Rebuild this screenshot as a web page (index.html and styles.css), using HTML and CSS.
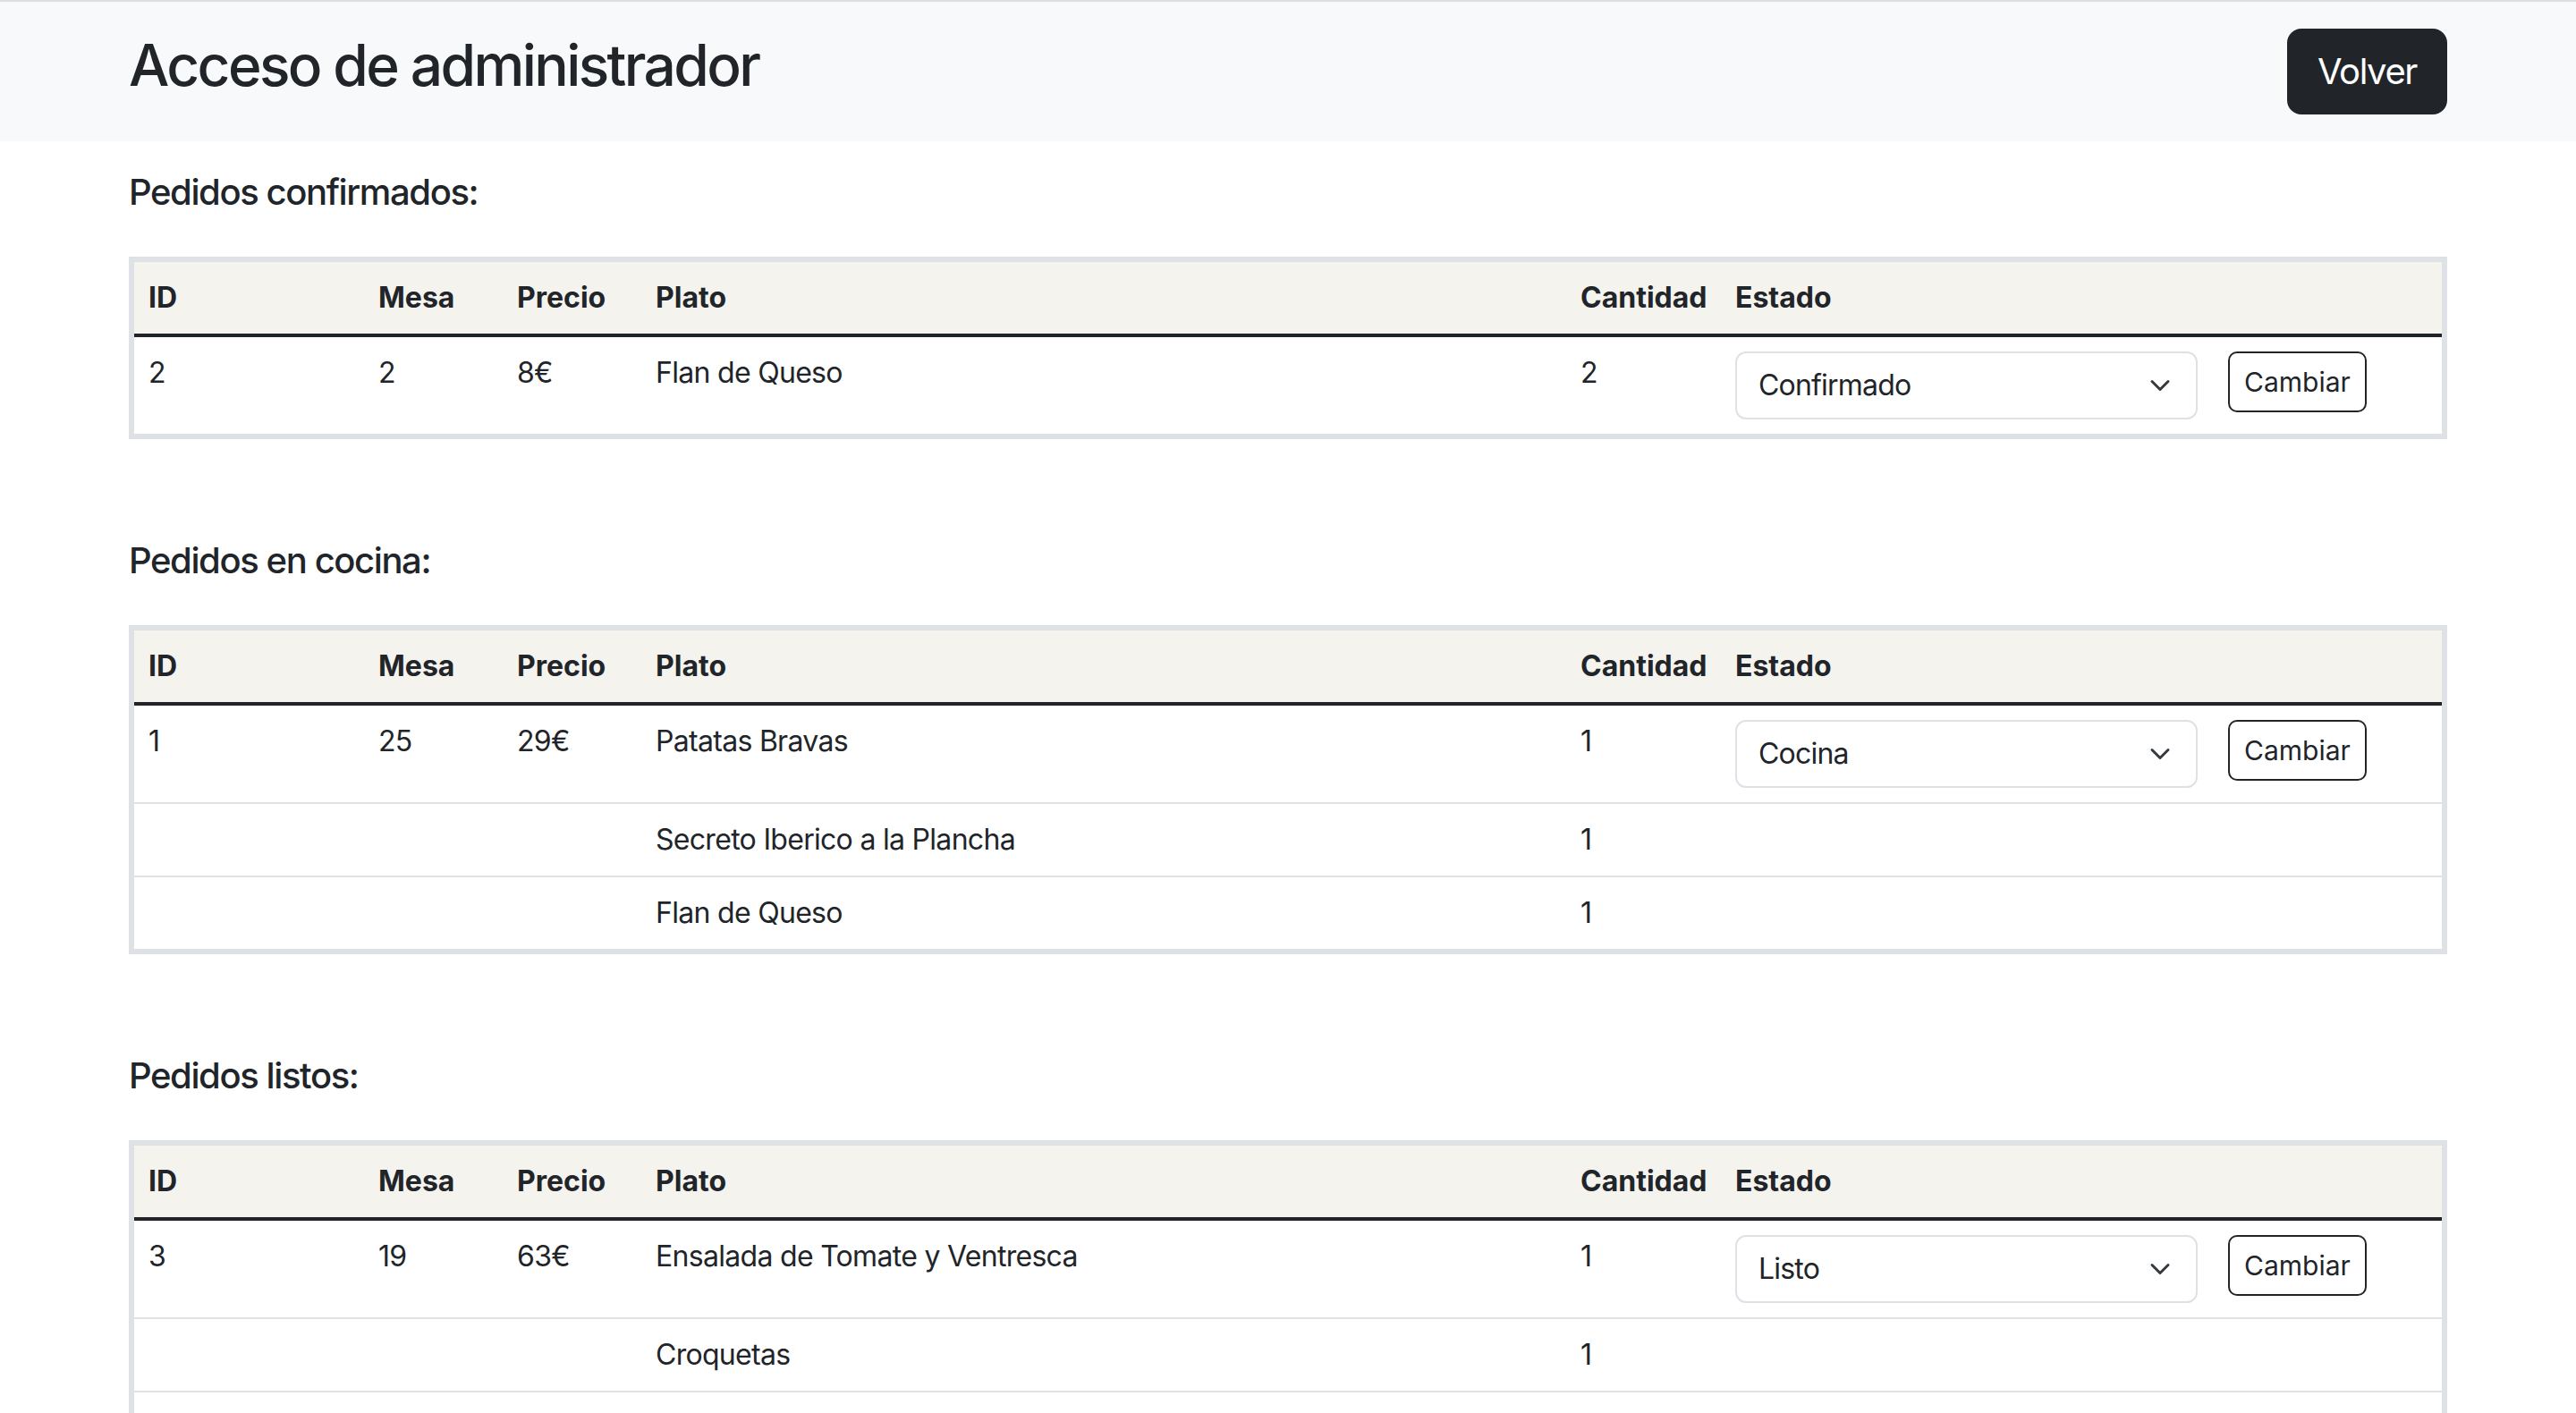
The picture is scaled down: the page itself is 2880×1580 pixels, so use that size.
FILE: index.html
```html
<!DOCTYPE html>
<html lang="es">
<head>
<meta charset="utf-8">
<title>Acceso de administrador</title>
<link rel="stylesheet" href="styles.css">
</head>
<body>
<header class="topbar">
  <h1 class="title">Acceso de administrador</h1>
  <button class="btn-volver" type="button">Volver</button>
</header>
<main class="content">
  <section class="orders">
    <h5 class="orders-title">Pedidos confirmados:</h5>
    <table class="orders-table">
      <colgroup>
        <col class="c-id"><col class="c-mesa"><col class="c-precio"><col class="c-plato"><col class="c-cant"><col class="c-estado"><col class="c-btn">
      </colgroup>
      <thead>
        <tr><th>ID</th><th>Mesa</th><th>Precio</th><th>Plato</th><th>Cantidad</th><th>Estado</th><th></th></tr>
      </thead>
      <tbody>
        <tr>
          <td>2</td><td>2</td><td>8€</td><td>Flan de Queso</td><td>2</td>
          <td><div class="select-wrap"><select class="state-select"><option>Confirmado</option><option>Cocina</option><option>Listo</option></select><svg class="chev" viewBox="0 0 16 16" width="32" height="24"><path d="m2 5 6 6 6-6"/></svg></div></td>
          <td><button class="btn-cambiar" type="button">Cambiar</button></td>
        </tr>
      </tbody>
    </table>
  </section>
  <section class="orders">
    <h5 class="orders-title">Pedidos en cocina:</h5>
    <table class="orders-table">
      <colgroup>
        <col class="c-id"><col class="c-mesa"><col class="c-precio"><col class="c-plato"><col class="c-cant"><col class="c-estado"><col class="c-btn">
      </colgroup>
      <thead>
        <tr><th>ID</th><th>Mesa</th><th>Precio</th><th>Plato</th><th>Cantidad</th><th>Estado</th><th></th></tr>
      </thead>
      <tbody>
        <tr>
          <td>1</td><td>25</td><td>29€</td><td>Patatas Bravas</td><td>1</td>
          <td><div class="select-wrap"><select class="state-select"><option>Cocina</option><option>Confirmado</option><option>Listo</option></select><svg class="chev" viewBox="0 0 16 16" width="32" height="24"><path d="m2 5 6 6 6-6"/></svg></div></td>
          <td><button class="btn-cambiar" type="button">Cambiar</button></td>
        </tr>
        <tr><td></td><td></td><td></td><td>Secreto Iberico a la Plancha</td><td>1</td><td></td><td></td></tr>
        <tr><td></td><td></td><td></td><td>Flan de Queso</td><td>1</td><td></td><td></td></tr>
      </tbody>
    </table>
  </section>
  <section class="orders">
    <h5 class="orders-title">Pedidos listos:</h5>
    <table class="orders-table">
      <colgroup>
        <col class="c-id"><col class="c-mesa"><col class="c-precio"><col class="c-plato"><col class="c-cant"><col class="c-estado"><col class="c-btn">
      </colgroup>
      <thead>
        <tr><th>ID</th><th>Mesa</th><th>Precio</th><th>Plato</th><th>Cantidad</th><th>Estado</th><th></th></tr>
      </thead>
      <tbody>
        <tr>
          <td>3</td><td>19</td><td>63€</td><td>Ensalada de Tomate y Ventresca</td><td>1</td>
          <td><div class="select-wrap"><select class="state-select"><option>Listo</option><option>Confirmado</option><option>Cocina</option></select><svg class="chev" viewBox="0 0 16 16" width="32" height="24"><path d="m2 5 6 6 6-6"/></svg></div></td>
          <td><button class="btn-cambiar" type="button">Cambiar</button></td>
        </tr>
        <tr><td></td><td></td><td></td><td>Croquetas</td><td>1</td><td></td><td></td></tr>
        <tr><td></td><td></td><td></td><td>Patatas Bravas</td><td>1</td><td></td><td></td></tr>
      </tbody>
    </table>
  </section>
</main>
</body>
</html>
```
FILE: styles.css
```css
* { box-sizing: border-box; }

html, body {
  margin: 0;
  padding: 0;
  background: #ffffff;
  color: #212529;
  font-family: Inter, "Noto Sans", "Liberation Sans", sans-serif;
  font-size: 32px;
  line-height: 1.5;
}

.topbar {
  display: flex;
  justify-content: space-between;
  align-items: flex-start;
  border-top: 2px solid #dcdee1;
  background: #f8f9fa;
  padding: 30px 144px;
}

.title {
  margin: 0;
  padding-top: 3px;
  font-size: 64px;
  font-weight: 500;
  line-height: 76px;
  letter-spacing: -2.6px;
  color: #212529;
}

.btn-volver {
  height: 96px;
  padding: 0 32px;
  border: 2px solid #212529;
  border-radius: 16px;
  background: #212529;
  color: #ffffff;
  font-family: inherit;
  font-size: 40px;
  letter-spacing: -1.4px;
  line-height: 1;
  cursor: pointer;
}

.content {
  padding: 0 144px;
}

.orders-title {
  margin: 33px 0 48px;
  font-size: 40px;
  font-weight: 500;
  line-height: 48px;
  letter-spacing: -1.4px;
}

.orders-table {
  width: 100%;
  table-layout: fixed;
  border-collapse: separate;
  border-spacing: 0;
  border: 6px solid #dee2e6;
  margin-bottom: 112px;
}

.c-id { width: 257px; }
.c-mesa { width: 155px; }
.c-precio { width: 155px; }
.c-plato { width: 1034px; }
.c-cant { width: 173px; }
.c-estado { width: 551px; }
.c-btn { width: 255px; }

.orders-table th,
.orders-table td {
  padding: 16px;
  text-align: left;
  vertical-align: top;
  line-height: 48px;
  white-space: nowrap;
}

.orders-table td {
  letter-spacing: -0.7px;
}

.orders-table th {
  background: #f5f3ee;
  font-weight: 700;
  border-bottom: 4px solid #212529;
}

.orders-table tbody tr + tr td {
  border-top: 2px solid #dee2e6;
}

.select-wrap {
  position: relative;
  width: 517px;
  height: 76px;
}

.state-select {
  appearance: none;
  -webkit-appearance: none;
  width: 100%;
  height: 76px;
  padding: 0 72px 0 24px;
  border: 2px solid #dee2e6;
  border-radius: 12px;
  background: #ffffff;
  color: #212529;
  font-family: inherit;
  font-size: 32px;
  letter-spacing: -0.8px;
  line-height: 48px;
}

.chev {
  position: absolute;
  right: 26px;
  top: 26px;
  fill: none;
  stroke: #343a40;
  stroke-width: 2;
  stroke-linecap: round;
  stroke-linejoin: round;
  pointer-events: none;
}

.btn-cambiar {
  height: 68px;
  padding: 0 16px;
  border: 2px solid #212529;
  border-radius: 10px;
  background: #ffffff;
  color: #212529;
  font-family: inherit;
  font-size: 30px;
  line-height: 1;
  cursor: pointer;
}
```
